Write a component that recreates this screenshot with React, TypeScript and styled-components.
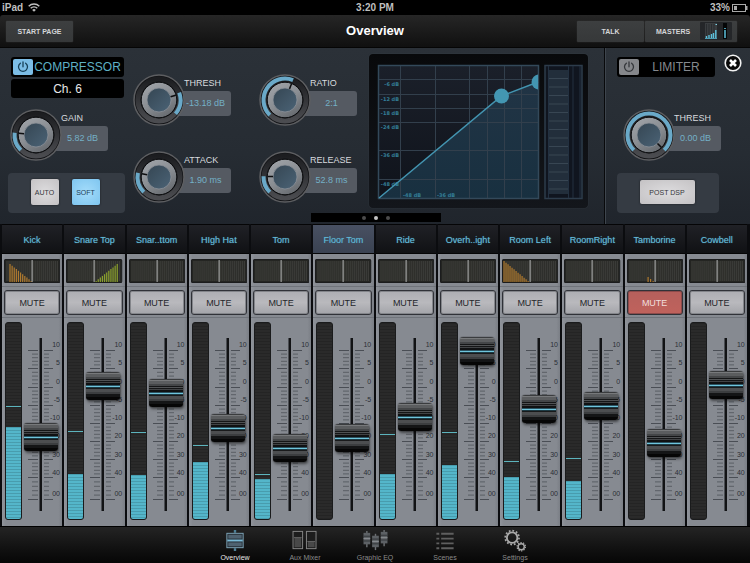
import React from "react";
import styled, { createGlobalStyle, css } from "styled-components";

const GlobalStyle = createGlobalStyle`
  *, *::before, *::after { box-sizing: border-box; }
  body { margin: 0; background: #000; font-family: "Liberation Sans", Arial, sans-serif; }
  button, input { font-family: inherit; margin: 0; }
  button { cursor: pointer; }
`;

const Page = styled.div`
  min-height: 100vh;
  display: flex;
  flex-direction: column;
  background: #000;
`;

/* ---------- status bar ---------- */

const StatusBar = styled.header`
  height: 15px;
  padding: 0 2px;
  display: grid;
  grid-template-columns: 1fr auto 1fr;
  align-items: center;
  color: #bfbfbf;
  font-size: 10px;
  font-weight: bold;
  line-height: 15px;
`;

const StatusGroup = styled.div<{ $end?: boolean }>`
  display: flex;
  align-items: center;
  gap: ${(p) => (p.$end ? 2 : 5)}px;
  justify-content: ${(p) => (p.$end ? "flex-end" : "flex-start")};
`;

/* ---------- navigation bar ---------- */

const NavBar = styled.div`
  height: 33px;
  padding: 0 13px 0 6px;
  display: grid;
  grid-template-columns: 1fr auto 1fr;
  align-items: center;
  border-radius: 3px 3px 0 0;
  background: linear-gradient(#262626, #101010);
  border-bottom: 1px solid #050505;
`;

const NavTitle = styled.h1`
  margin: 0;
  padding-left: 7px;
  color: #fff;
  font-size: 13px;
  line-height: 16px;
`;

const NavButtons = styled.div`
  display: flex;
  justify-content: flex-end;
  gap: 1px;
`;

const NavButton = styled.button<{ $wide?: boolean }>`
  width: ${(p) => (p.$wide ? 92 : 67)}px;
  height: 21px;
  padding: 0 ${(p) => (p.$wide ? 5 : 0)}px 0 ${(p) => (p.$wide ? 11 : 0)}px;
  display: flex;
  align-items: center;
  justify-content: ${(p) => (p.$wide ? "space-between" : "center")};
  border: 0;
  border-radius: 1px;
  background: linear-gradient(#3d3f40, #363839);
  box-shadow: 0 0 1px #555;
  color: #d4d6d8;
  font-size: 7px;
  font-weight: bold;
`;

/* ---------- dynamics panel ---------- */

const DynamicsPanel = styled.section`
  position: relative;
  height: 176px;
  display: flex;
  background: linear-gradient(#2b3138, #262c33 60%, #20252c);
`;

const CompressorSection = styled.div`
  flex: 1;
  min-width: 0;
  padding: 6px 16px 0 8px;
  display: flex;
  align-items: flex-start;
`;

const LimiterSection = styled.div`
  width: 146px;
  padding: 9px 0 0 12px;
  border-left: 1px solid #08090b;
  box-shadow: inset 1px 0 #3e454d;
`;

const ModuleColumn = styled.div`
  width: 117px;
  padding-top: 3px;
  margin-right: 8px;
`;

const KnobColumn = styled.div`
  width: 98px;
  padding-top: 20px;
  margin-right: 28px;
  display: flex;
  flex-direction: column;
  gap: 25px;

  & + & { margin-right: 12px; }
`;

const TitleRow = styled.div`
  display: flex;
  align-items: center;
  gap: 9px;
`;

const ModuleTitle = styled.h2<{ $on?: boolean; $narrow?: boolean }>`
  width: ${(p) => (p.$narrow ? 98 : 113)}px;
  height: 20px;
  margin: 0 0 0 ${(p) => (p.$narrow ? 0 : 3)}px;
  padding: 0 2px;
  display: flex;
  align-items: center;
  border-radius: 3px;
  background: #000;
  color: ${(p) => (p.$on ? "#5fb0c4" : "#85898e")};
  font-size: 12px;
  font-weight: normal;

  span { flex: 1; text-align: center; }
`;

const PowerButton = styled.button<{ $on?: boolean }>`
  width: 20px;
  height: 16px;
  padding: 0;
  display: flex;
  align-items: center;
  justify-content: center;
  border: 0;
  border-radius: 2px;
  background: ${(p) => (p.$on ? "#7cbde6" : "#85878b")};
  color: ${(p) => (p.$on ? "#174058" : "#34373b")};
`;

const ChannelBox = styled.div`
  width: 113px;
  height: 19px;
  margin: 2px 0 0 3px;
  border-radius: 3px;
  background: #000;
  color: #e8e8e8;
  font-size: 12px;
  line-height: 20px;
  text-align: center;
`;

const KnobLabel = styled.label`
  position: relative;
  display: flex;
  height: 52px;
`;

const KnobDrawing = styled.svg`
  position: relative;
  z-index: 1;
  flex: none;
  margin-right: -8px;
`;

const KnobInput = styled.input`
  position: absolute;
  z-index: 2;
  left: 0;
  top: 0;
  width: 52px;
  height: 52px;
  opacity: 0;
`;

const KnobText = styled.span`
  width: 54px;
  padding-top: 2px;
  color: #d7dade;
  font-size: 9px;
  line-height: 15px;
  white-space: nowrap;

  > span { padding-left: 7px; }
`;

const KnobValue = styled.output`
  display: block;
  height: 25px;
  padding-left: 3px;
  border-radius: 3px;
  background: #555a62;
  color: #74b0c6;
  line-height: 25px;
  text-align: center;
`;

const KnobSlot = styled.div<{ $top: number; $left: number }>`
  padding: ${(p) => p.$top}px 0 12px ${(p) => p.$left}px;
`;

const ButtonTray = styled.div<{ $narrow?: boolean }>`
  width: ${(p) => (p.$narrow ? 102 : 117)}px;
  height: 40px;
  padding-right: ${(p) => (p.$narrow ? 2 : 3)}px;
  padding-bottom: 2px;
  display: flex;
  align-items: center;
  justify-content: center;
  gap: 13px;
  border-radius: 4px;
  background: #353b43;
`;

const PadButton = styled.button<{ $on?: boolean; $wide?: boolean }>`
  width: ${(p) => (p.$wide ? 55 : 28)}px;
  height: ${(p) => (p.$wide ? 24 : 26)}px;
  padding: 0;
  border: 0;
  border-radius: 2px;
  background: ${(p) => (p.$on ? "radial-gradient(#a4dcfb, #7ec5ef)" : "radial-gradient(#dddcde, #c4c2c4)")};
  box-shadow: 0 0 2px #14171b;
  color: ${(p) => (p.$on ? "#1f4256" : "#35363a")};
  font-size: 7px;
`;

const CloseButton = styled.button`
  width: 18px;
  height: 18px;
  margin-top: -9px;
  padding: 0;
  border: 0;
  background: none;
  line-height: 0;
`;

const GraphFrame = styled.div`
  flex: 1;
  min-width: 0;
  height: 154px;
  padding: 10px 4px 8px 8px;
  border-radius: 4px;
  background: linear-gradient(#08090b, #13161b);
  box-shadow: 0 0 1px #4a525c;

  svg { display: block; width: 100%; height: 136px; }
`;

const PageDots = styled.div`
  position: absolute;
  left: 50%;
  bottom: 2px;
  width: 130px;
  height: 9px;
  margin-left: -64px;
  display: flex;
  align-items: center;
  justify-content: center;
  gap: 8px;
  background: #000;
`;

const Dot = styled.button<{ $on?: boolean }>`
  width: 4px;
  height: 4px;
  padding: 0;
  border: 0;
  border-radius: 50%;
  background: ${(p) => (p.$on ? "#c4c4c4" : "#4c4c4c")};
`;

/* ---------- channel strips ---------- */

const Mixer = styled.main`
  flex: 1;
  padding: 0 3px 0 2px;
  display: grid;
  grid-template-columns: repeat(12, minmax(0, 1fr));
  gap: 2px;
  background: #0b0c0f;
`;

const Strip = styled.section`
  display: flex;
  flex-direction: column;
  background: linear-gradient(90deg, #90949b, #868a91 6%, #868a91 94%, #7b7f86);
`;

const StripName = styled.button<{ $selected?: boolean }>`
  height: 30px;
  padding: 2px 0 0;
  border: 0;
  border-top: 1px solid #050506;
  border-bottom: 1px solid #050506;
  background: ${(p) => (p.$selected ? "linear-gradient(#485062, #3a4252)" : "linear-gradient(#202126, #101114)")};
  color: #66b9d6;
  font-size: 9px;
  white-space: nowrap;
  text-shadow: 0 0 1px #3a86a2;
`;

const PanLabel = styled.label`
  position: relative;
  height: 33px;
  padding: 5px 2px 4px;
  border-bottom: 1px solid #70747b;

  svg { display: block; width: 100%; height: 24px; }
`;

const PanInput = styled.input`
  position: absolute;
  left: 2px;
  top: 5px;
  width: 56px;
  height: 24px;
  opacity: 0;
`;

const MuteCell = styled.div`
  height: 31px;
  padding: 3px 2px;
  border-bottom: 1px solid #70747b;
`;

const MuteButton = styled.button<{ $on?: boolean }>`
  width: 100%;
  height: 25px;
  padding: 0;
  border: 1px solid #303238;
  border-radius: 3px;
  background: ${(p) => (p.$on ? "linear-gradient(#b5605c, #c0625c)" : "linear-gradient(#adaeb3, #b9b9bd 50%, #a3a4a9)")};
  box-shadow: inset 0 0 0 1px ${(p) => (p.$on ? "#8d4a4a" : "#83858a")};
  color: ${(p) => (p.$on ? "#f1dedd" : "#24262a")};
  font-size: 9px;
`;

const FaderRow = styled.div`
  flex: 1;
  padding: 4px 0 6px 3px;
  display: flex;
`;

const stripes = css`
  background-image: repeating-linear-gradient(rgba(0, 0, 0, 0.14) 0 1px, transparent 1px 3px);
`;

const MeterWell = styled.div`
  flex: none;
  width: 17px;
  height: 198px;
  display: flex;
  flex-direction: column-reverse;
  border: 1px solid #1a1b1c;
  border-radius: 3px;
  overflow: hidden;
  background-color: #2a2a2a;
  ${stripes}
`;

const MeterFill = styled.div`
  background-color: #54b6ca;
  ${stripes}
`;

const MeterPeak = styled.div`
  height: 1px;
  background: #5cb4bd;
`;

const FaderBox = styled.div`
  flex: 1;
  min-width: 0;
  height: 198px;
  display: grid;
  grid-template-columns: 38px;

  > * { grid-area: 1 / 1; }
`;

const ScaleLabels = styled.ul`
  height: 161px;
  margin: 17px 0 0;
  padding: 0;
  display: flex;
  flex-direction: column;
  justify-content: space-between;
  list-style: none;
  color: #2b2f36;
  font-size: 7px;
  line-height: 12px;
  text-align: right;

  li:last-child { margin-top: 3px; }
`;

const cap = css`
  width: 34px;
  height: 28px;
  border: 0;
  border-radius: 3px;
  background: linear-gradient(
    #3a3c3e 0 1px, #77797b 1px 2px, #5b5d5f 2px 5px, #444648 5px 7px,
    #151617 7px 8px, #505254 8px 9px, #151617 9px 10px, #414345 10px 11px,
    #101112 11px 13px, #2b5260 13px 14px, #6fc5dc 14px 15px, #1c3a44 15px 16px,
    #191a1b 16px 17px, #4c4e50 17px 20px, #3b3d3f 20px 22px, #141516 22px 25px, #060606 25px
  );
  box-shadow: 0 0 1px #111, 1px 2px 3px rgba(0, 0, 0, 0.5);
`;

const FaderInput = styled.input`
  width: 34px;
  height: 175px;
  margin: 15px 0 0 2px;
  writing-mode: vertical-lr;
  direction: rtl;
  appearance: none;
  background: transparent;

  &::-webkit-slider-thumb { appearance: none; ${cap} }
  &::-moz-range-thumb { ${cap} }
`;

/* ---------- tab bar ---------- */

const TabBar = styled.nav`
  height: 37px;
  display: flex;
  justify-content: center;
  background: linear-gradient(#242424, #111 60%, #060606);
  border-top: 1px solid #000;
`;

const Tab = styled.button<{ $on?: boolean }>`
  width: 70px;
  padding: 2px 0 0;
  display: flex;
  flex-direction: column;
  align-items: center;
  gap: 1px;
  border: 0;
  background: none;
  color: ${(p) => (p.$on ? "#e6e6e6" : "#8a8a8a")};
  font-size: 7px;
  line-height: 10px;
`;

/* ---------- drawings ---------- */

const WifiIcon = () => (
  <svg width="12" height="9" viewBox="0 0 12 9" fill="none" stroke="#bfbfbf" strokeWidth="1.5">
    <path d="M.7 3.2a7.6 7.6 0 0 1 10.6 0M2.7 5.3a4.8 4.8 0 0 1 6.6 0" />
    <path d="M4.2 6.9a2.6 2.6 0 0 1 3.6 0L6 8.8z" fill="#bfbfbf" stroke="none" />
  </svg>
);

const BatteryIcon = () => (
  <svg width="16" height="8" viewBox="0 0 16 8">
    <rect x=".5" y=".5" width="13" height="7" fill="none" stroke="#a9a9a9" />
    <rect x="2" y="2" width="3" height="4" fill="#a9a9a9" />
    <rect x="14" y="2" width="1.5" height="4" fill="#a9a9a9" />
  </svg>
);

const PowerIcon = () => (
  <svg width="12" height="12" viewBox="0 0 12 12" fill="none" stroke="currentColor" strokeWidth="1.3" strokeLinecap="round">
    <path d="M3.4 2.2a4.5 4.5 0 1 0 5.2 0M6 .8v5" />
  </svg>
);

const MastersMeters = () => (
  <svg width="32" height="18" viewBox="0 0 32 18">
    <rect width="32" height="18" rx="1" fill="#242629" />
    <rect x="5" y="1" width="12" height="16" fill="#3a3d40" />
    <path d="M6.5 2v14M9 2v14M11.5 2v14M14 2v14" stroke="#292c2f" />
    <path d="M5 16.5h12" stroke="#4d9db4" />
    <path d="M6.5 14v2M9 13v3M11.5 12v4M13.5 11v5M15.8 8v8" stroke="#5cc1dc" strokeWidth="1.4" />
    <path d="M15.5 2.5h1.5" stroke="#7acfe0" />
    <rect x="23" y="1" width="4" height="16" fill="#050607" />
    <path d="M25 8v8" stroke="#5cc1dc" strokeWidth="1.5" />
    <path d="M24 6.5h2" stroke="#5cc1dc" strokeWidth="0.8" />
  </svg>
);

const CloseIcon = () => (
  <svg width="18" height="18" viewBox="0 0 18 18">
    <circle cx="9" cy="9" r="7.8" fill="#0a0a0a" stroke="#f2f2f2" strokeWidth="1.6" />
    <path d="M6 6l6 6M12 6l-6 6" stroke="#fff" strokeWidth="2.6" />
  </svg>
);

const point = (angle: number, r: number) => {
  const a = (angle * Math.PI) / 180;
  return `${(26 + r * Math.sin(a)).toFixed(2)} ${(26 - r * Math.cos(a)).toFixed(2)}`;
};

interface KnobProps {
  label: string;
  value: string;
  angle: number;
  from?: number;
  to?: number;
}

function Knob({ label, value, angle, from = -135, to = angle }: KnobProps) {
  const id = React.useId();
  return (
    <KnobLabel>
      <KnobDrawing width="52" height="52" viewBox="0 0 52 52">
        <defs>
          <linearGradient id={`${id}bezel`} x1="0" y1="0" x2="0" y2="1">
            <stop offset="0" stopColor="#1c1d20" />
            <stop offset="1" stopColor="#4b4c50" />
          </linearGradient>
          <linearGradient id={`${id}metal`} x1="0.2" y1="0" x2="0.8" y2="1">
            <stop offset="0" stopColor="#9fa3a8" />
            <stop offset="0.5" stopColor="#8a8e93" />
            <stop offset="1" stopColor="#63676c" />
          </linearGradient>
          <linearGradient id={`${id}core`} x1="0" y1="0" x2="1" y2="1">
            <stop offset="0" stopColor="#354653" />
            <stop offset="1" stopColor="#4b6376" />
          </linearGradient>
        </defs>
        <circle cx="26" cy="26" r="25" fill="#131417" stroke="#5d5e61" strokeWidth="1.5" />
        <circle cx="26" cy="26" r="21" fill="none" stroke={`url(#${id}bezel)`} strokeWidth="5" />
        <path
          d={`M${point(from, 21.5)} A21.5 21.5 0 ${to - from > 180 ? 1 : 0} 1 ${point(to, 21.5)}`}
          fill="none"
          stroke="#6aa9c8"
          strokeWidth="4"
        />
        <circle cx="26" cy="26" r="17.8" fill={`url(#${id}metal)`} stroke="#0c0d0f" strokeWidth="1" />
        <circle cx="26" cy="26" r="12" fill={`url(#${id}core)`} stroke="#8b9198" strokeWidth="0.8" />
        <path d={`M${point(angle, 12)} L${point(angle, 17.5)}`} stroke="#0c0d0f" strokeWidth="1.5" />
      </KnobDrawing>
      <KnobText>
        <span>{label}</span>
        <KnobValue>{value}</KnobValue>
      </KnobText>
      <KnobInput type="range" min={-135} max={135} defaultValue={angle} aria-label={label} />
    </KnobLabel>
  );
}

const gridX = [23, 58, 92, 110, 127, 144];
const gridY: [number, string][] = [
  [15, "-6 dB"],
  [30, "-12 dB"],
  [44, "-18 dB"],
  [58, "-24 dB"],
  [86, "-36 dB"],
  [115, "-48 dB"],
];

function CompressorGraph() {
  return (
    <svg viewBox="0 0 207 136" preserveAspectRatio="none" role="img" aria-label="Compression curve">
      <defs>
        <linearGradient id="plot" x1="0" y1="0" x2="0" y2="1">
          <stop offset="0" stopColor="#1b202a" />
          <stop offset="1" stopColor="#0f131b" />
        </linearGradient>
        <linearGradient id="area" x1="0" y1="0" x2="0" y2="1">
          <stop offset="0" stopColor="#213445" />
          <stop offset="1" stopColor="#183040" />
        </linearGradient>
        <clipPath id="plotClip">
          <rect x="0" y="0" width="161" height="136" />
        </clipPath>
      </defs>
      <rect x="1.5" y="1.5" width="160" height="133" fill="url(#plot)" />
      <path d="M2 134L124.5 32L161 18V134z" fill="url(#area)" />
      <path
        d={gridX.map((x) => `M${x + 0.5} 2V134`).join("") + gridY.map(([y]) => `M2 ${y + 0.5}H161`).join("")}
        stroke="#323f4c"
        strokeWidth="1"
      />
      <rect x="1.5" y="1.5" width="160" height="133" fill="none" stroke="#33495a" strokeWidth="1.5" />
      <g fill="#347f97" fontFamily='"DejaVu Sans", sans-serif' fontWeight="bold" fontSize="5">
        {gridY.map(([y, text]) => (
          <text key={text} x="22" y={y + 6.5} textAnchor="end">
            {text}
          </text>
        ))}
        <text x="26" y="133">-48 dB</text>
        <text x="60" y="133">-36 dB</text>
      </g>
      <path d="M2 134L124.5 32L161 18" fill="none" stroke="#4394b0" strokeWidth="1.5" />
      <g fill="#4396b2" clipPath="url(#plotClip)">
        <circle cx="124.5" cy="32" r="7.5" />
        <circle cx="162" cy="18" r="7.5" />
      </g>
      <rect x="168" y="1.5" width="37" height="133" fill="#10151f" stroke="#2d3c4b" strokeWidth="1.5" />
      <rect x="171.5" y="6" width="20" height="124" fill="#222e3b" />
      <path
        d={Array.from({ length: 14 }, (_, i) => `M171 ${14.5 + i * 8.5}h20`).join("")}
        stroke="#384653"
        strokeWidth="1"
      />
      <path d="M171.5 2v132M191.5 2v132M196 2v132M203 2v132" stroke="#223040" />
    </svg>
  );
}

type Pan = { color: string; start: number; end: number; startHeight: number; endHeight: number };

function PanDrawing({ pan }: { pan?: Pan }) {
  const bars: React.ReactNode[] = [];
  if (pan) {
    const steps = Math.max(1, Math.floor(Math.abs(pan.end - pan.start) / 2));
    for (let i = 0; i <= steps; i++) {
      const t = i / steps;
      const x = pan.start + t * (pan.end - pan.start);
      const h = pan.startHeight + t * (pan.endHeight - pan.startHeight);
      bars.push(<path key={i} d={`M${x} ${23 - h}V23`} stroke={pan.color} strokeWidth="1.2" />);
    }
  }
  return (
    <svg viewBox="0 0 56 24" preserveAspectRatio="none">
      <rect x=".5" y=".5" width="55" height="23" rx="1" fill="#242522" stroke="#1b1c1d" />
      <path d={Array.from({ length: 26 }, (_, i) => `M${3 + i * 2} 2V22`).join("")} stroke="#474844" strokeWidth="0.9" />
      {bars}
      <path d="M28 1V23" stroke="#b0b2b3" strokeWidth="1" />
    </svg>
  );
}

const majorTicks = [28, 46, 65, 83, 101, 119, 137, 155, 177];

const majorPath = majorTicks.map((y) => `M6 ${y + 0.5}h25`).join("");

const minorPath = majorTicks
  .slice(0, -1)
  .map((y, i) =>
    [1, 2, 3, 4].map((k) => `M10 ${(y + 0.5 + ((majorTicks[i + 1] - y) * k) / 5).toFixed(1)}h17`).join("")
  )
  .join("");

const scale = ["10", "5", "0", "-5", "-10", "20", "30", "40", "00"];

interface Channel {
  name: string;
  level: number;
  meter?: number;
  peak?: number;
  pan?: Pan;
  muted?: boolean;
  selected?: boolean;
}

const orange = "#b07a2e";
const green = "#8aa02c";

const channels: Channel[] = [
  { name: "Kick", level: 61, meter: 92, peak: 112, pan: { color: orange, start: 6, end: 27, startHeight: 18, endHeight: 1 } },
  { name: "Snare Top", level: 112, meter: 45, peak: 87, pan: { color: green, start: 30, end: 51, startHeight: 1, endHeight: 18 } },
  { name: "Snar..ttom", level: 105, meter: 44, peak: 86 },
  { name: "HIgh Hat", level: 70, meter: 57, peak: 73 },
  { name: "Tom", level: 50, meter: 40, peak: 44 },
  { name: "Floor Tom", level: 60, selected: true },
  { name: "Ride", level: 81, meter: 45, peak: 84 },
  { name: "Overh..ight", level: 147, meter: 54, peak: 86 },
  { name: "Room Left", level: 89, meter: 42, peak: 57, pan: { color: orange, start: 2, end: 26, startHeight: 21, endHeight: 1 } },
  { name: "RoomRight", level: 92, meter: 38, peak: 60 },
  { name: "Tamborine", level: 55, muted: true, pan: { color: orange, start: 21, end: 26, startHeight: 5, endHeight: 1 } },
  { name: "Cowbell", level: 113 },
];

const METER_MAX = 196;
const percent = (v: number) => `${(v / METER_MAX) * 100}%`;

function ChannelStrip({ name, level, meter = 0, peak, pan, muted, selected }: Channel) {
  return (
    <Strip aria-label={name}>
      <StripName $selected={selected} aria-pressed={!!selected}>
        {name}
      </StripName>
      <PanLabel>
        <PanDrawing pan={pan} />
        <PanInput type="range" aria-label={`${name} pan`} />
      </PanLabel>
      <MuteCell>
        <MuteButton $on={muted} aria-pressed={!!muted}>
          MUTE
        </MuteButton>
      </MuteCell>
      <FaderRow>
        <MeterWell role="meter" aria-label={`${name} meter`} aria-valuemin={0} aria-valuemax={METER_MAX} aria-valuenow={meter}>
          <MeterFill style={{ height: percent(meter) }} />
          {peak !== undefined && (
            <>
              <div style={{ height: percent(peak - meter) }} />
              <MeterPeak />
            </>
          )}
        </MeterWell>
        <FaderBox>
          <svg width="38" height="198" viewBox="0 0 38 198">
            <path d={minorPath} stroke="#5a5e65" />
            <path d={majorPath} stroke="#4a4e55" />
            <rect x="16" y="16" width="6" height="173" fill="#868a91" />
            <rect x="18" y="16" width="2" height="173" fill="#121315" />
            <path d="M17.5 16v173" stroke="#4b4e53" />
          </svg>
          <ScaleLabels>
            {scale.map((s) => (
              <li key={s}>{s}</li>
            ))}
          </ScaleLabels>
          <FaderInput type="range" min={0} max={147} defaultValue={level} aria-label={`${name} level`} />
        </FaderBox>
      </FaderRow>
    </Strip>
  );
}

const OverviewIcon = () => (
  <svg width="24" height="24" viewBox="0 0 24 24">
    <path d="M12 1v3M12 20v3" stroke="#4d7f96" strokeWidth="2.5" />
    <rect x="3.5" y="4.5" width="17" height="15" fill="#232c33" stroke="#7fa5b8" />
    <rect x="5" y="6" width="14" height="4" fill="#4f6270" />
    <rect x="5" y="14" width="14" height="4" fill="#4f6270" />
    <rect x="4" y="11" width="16" height="2" fill="#79b9d5" />
  </svg>
);

const AuxIcon = () => (
  <svg width="26" height="24" viewBox="0 0 26 24">
    {[0.5, 14.5].map((x, i) => (
      <g key={x}>
        <rect x={x} y="2.5" width="10" height="18" fill="#1d1d1d" stroke="#858585" />
        <rect x={x + 1.5} y={i ? 13 : 9} width="7" height={i ? 6 : 10} fill="#484848" />
        <path d={`M${x + 1} ${i ? 13 : 9}h8`} stroke="#666" />
      </g>
    ))}
  </svg>
);

const EqIcon = () => (
  <svg width="28" height="24" viewBox="0 0 28 24">
    {[
      [2, 4],
      [11, 7],
      [20, 3],
    ].map(([x, y]) => (
      <g key={x}>
        <path d={`M${x + 3.5} ${y - 2}v17`} stroke="#6c6f73" strokeWidth="1.5" />
        <rect x={x} y={y} width="7" height="12" fill="#5d6165" />
        <path d={`M${x} ${y + 3.5}h7M${x} ${y + 8.5}h7`} stroke="#303336" />
        <path d={`M${x} ${y + 6}h7`} stroke="#85898d" strokeWidth="1.2" />
      </g>
    ))}
  </svg>
);

const ScenesIcon = () => (
  <svg width="20" height="24" viewBox="0 0 20 24" stroke="#5f5f5f" strokeWidth="2">
    <path d="M1 5h3M1 10h3M1 15h3M1 20h3M6 5h13M6 10h13M6 15h13M6 20h13" />
  </svg>
);

const SettingsIcon = () => (
  <svg width="24" height="24" viewBox="0 0 24 24" fill="none" stroke="#a9a9a9">
    <circle cx="9" cy="9" r="5.5" strokeWidth="2" />
    <circle cx="9" cy="9" r="7.2" strokeWidth="1.8" strokeDasharray="1.88 1.89" />
    <circle cx="18.5" cy="18.5" r="3.2" strokeWidth="1.5" />
    <circle cx="18.5" cy="18.5" r="4.4" strokeWidth="1.2" strokeDasharray="1.38 1.384" />
  </svg>
);

const tabs: { label: string; icon: React.ReactNode; on?: boolean }[] = [
  { label: "Overview", icon: <OverviewIcon />, on: true },
  { label: "Aux Mixer", icon: <AuxIcon /> },
  { label: "Graphic EQ", icon: <EqIcon /> },
  { label: "Scenes", icon: <ScenesIcon /> },
  { label: "Settings", icon: <SettingsIcon /> },
];

export default function App() {
  return (
    <Page>
      <GlobalStyle />
      <StatusBar>
        <StatusGroup>
          <span>iPad</span>
          <WifiIcon />
        </StatusGroup>
        <span>3:20 PM</span>
        <StatusGroup $end>
          <span>33%</span>
          <BatteryIcon />
        </StatusGroup>
      </StatusBar>

      <NavBar>
        <NavButton>START PAGE</NavButton>
        <NavTitle>Overview</NavTitle>
        <NavButtons>
          <NavButton>TALK</NavButton>
          <NavButton $wide>
            MASTERS
            <MastersMeters />
          </NavButton>
        </NavButtons>
      </NavBar>

      <DynamicsPanel>
        <CompressorSection>
          <ModuleColumn>
            <ModuleTitle $on>
              <PowerButton $on aria-label="Compressor power">
                <PowerIcon />
              </PowerButton>
              <span>COMPRESSOR</span>
            </ModuleTitle>
            <ChannelBox>Ch. 6</ChannelBox>
            <KnobSlot $top={11} $left={2}>
              <Knob label="GAIN" value="5.82 dB" angle={-84} />
            </KnobSlot>
            <ButtonTray>
              <PadButton>AUTO</PadButton>
              <PadButton $on>SOFT</PadButton>
            </ButtonTray>
          </ModuleColumn>
          <KnobColumn>
            <Knob label="THRESH" value="-13.18 dB" angle={74} from={70} to={130} />
            <Knob label="ATTACK" value="1.90 ms" angle={-79} />
          </KnobColumn>
          <KnobColumn>
            <Knob label="RATIO" value="2:1" angle={22} />
            <Knob label="RELEASE" value="52.8 ms" angle={-88} />
          </KnobColumn>
          <GraphFrame>
            <CompressorGraph />
          </GraphFrame>
        </CompressorSection>
        <LimiterSection>
          <TitleRow>
            <ModuleTitle $narrow>
              <PowerButton aria-label="Limiter power">
                <PowerIcon />
              </PowerButton>
              <span>LIMITER</span>
            </ModuleTitle>
            <CloseButton aria-label="Close">
              <CloseIcon />
            </CloseButton>
          </TitleRow>
          <KnobSlot $top={32} $left={6}>
            <Knob label="THRESH" value="0.00 dB" angle={135} />
          </KnobSlot>
          <ButtonTray $narrow>
            <PadButton $wide>POST DSP</PadButton>
          </ButtonTray>
        </LimiterSection>
        <PageDots>
          <Dot aria-label="Page 1" />
          <Dot $on aria-label="Page 2" />
          <Dot aria-label="Page 3" />
        </PageDots>
      </DynamicsPanel>

      <Mixer>
        {channels.map((c) => (
          <ChannelStrip key={c.name} {...c} />
        ))}
      </Mixer>

      <TabBar>
        {tabs.map((t) => (
          <Tab key={t.label} $on={t.on} aria-current={t.on ? "page" : undefined}>
            {t.icon}
            {t.label}
          </Tab>
        ))}
      </TabBar>
    </Page>
  );
}
